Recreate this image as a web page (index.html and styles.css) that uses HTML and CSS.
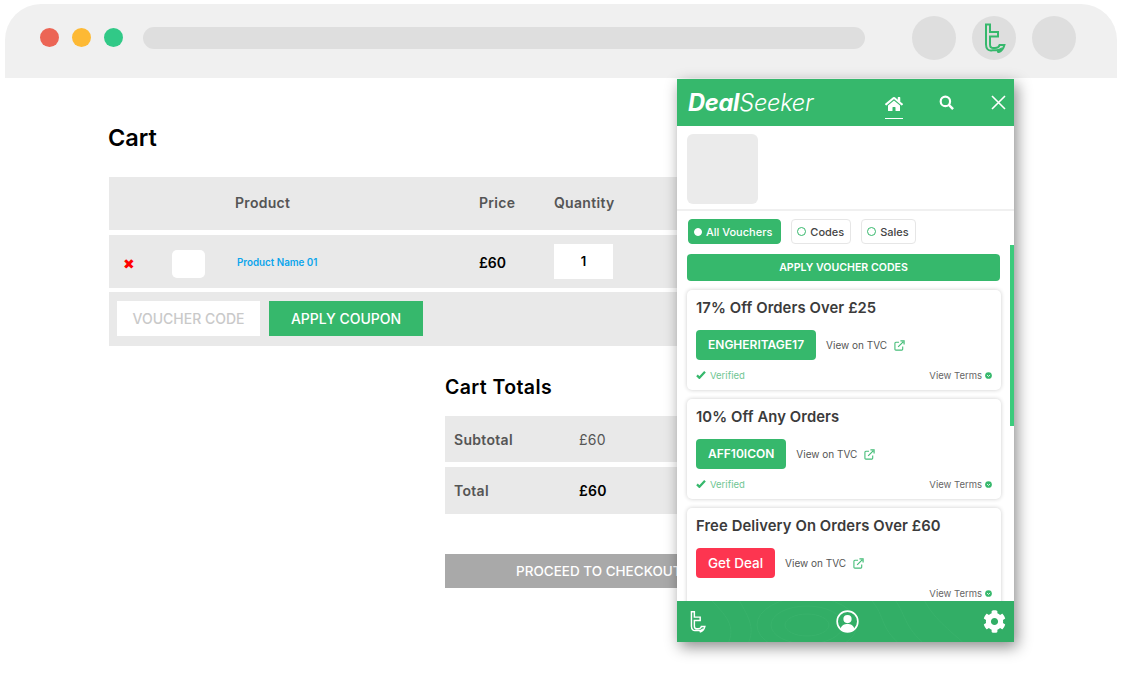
FILE: index.html
```html
<!DOCTYPE html>
<html lang="en">
<head>
    <meta charset="UTF-8">
    <meta name="viewport" content="width=device-width, initial-scale=1.0">
    <title>DealSeeker</title>
    <link rel="stylesheet" href="styles.css">
</head>
<body>
    <svg class="icon-defs" width="0" height="0">
        <symbol id="t-logo" viewBox="0 0 22 30">
            <path d="M2 1.500h4v7.500h8v4.500H6v8c0 2.600 1.400 3.600 3.500 3.600h1.500c2.600 0 4-1 4.600-3.100h4.800c-1 4-2.800 6.500-6.900 7.400 1.800-1.200 2.400-2.100 2.700-3-1 .6-2.300.9-3.900.9H8.500C4.300 28.300 2 25.700 2 21.500z"/>
        </symbol>
        <symbol id="external" viewBox="0 0 12 12">
            <path d="M9.500 7v3a1 1 0 0 1-1 1H2a1 1 0 0 1-1-1V3.500a1 1 0 0 1 1-1h3.500" fill="none" stroke="currentColor" stroke-width="1.200"/>
            <path d="M4.500 7.500L10 2M7 1h4v4" fill="none" stroke="currentColor" stroke-width="1.300"/>
        </symbol>
        <symbol id="check" viewBox="0 0 12 10">
            <path d="M1 5.500l3 3L11 1" fill="none" stroke="currentColor" stroke-width="2.800"/>
        </symbol>
        <symbol id="down-circle" viewBox="0 0 10 10">
            <circle cx="5" cy="5" r="4.800" fill="currentColor"/>
            <path d="M2.800 4.200L5 6.400l2.200-2.200" fill="none" stroke="#fff" stroke-width="1.200"/>
        </symbol>
    </svg>

    <header class="browser-bar">
        <div class="dots">
            <span class="dot dot-red"></span>
            <span class="dot dot-yellow"></span>
            <span class="dot dot-green"></span>
        </div>
        <div class="address"></div>
        <div class="browser-buttons">
            <span class="round-btn"></span>
            <span class="round-btn">
                <svg class="ext-logo" width="22" height="30"><use href="#t-logo"/></svg>
            </span>
            <span class="round-btn"></span>
        </div>
    </header>

    <main class="shop">
        <h1 class="cart-title">Cart</h1>

        <div class="cart-row cart-head">
            <span class="col-product">Product</span>
            <span class="col-price">Price</span>
            <span class="col-qty">Quantity</span>
        </div>
        <div class="cart-row cart-item">
            <span class="remove">&#10006;</span>
            <span class="thumb"></span>
            <a class="product-name">Product Name 01</a>
            <span class="col-price strong">£60</span>
            <span class="qty-box">1</span>
        </div>
        <div class="cart-row cart-coupon">
            <span class="voucher-input">VOUCHER CODE</span>
            <span class="coupon-btn">APPLY COUPON</span>
        </div>

        <section class="totals">
            <h2 class="totals-title">Cart Totals</h2>
            <div class="totals-row subtotal">
                <span class="totals-label">Subtotal</span>
                <span>£60</span>
            </div>
            <div class="totals-row total">
                <span class="totals-label">Total</span>
                <span class="strong">£60</span>
            </div>
            <div class="checkout">PROCEED TO CHECKOUT</div>
        </section>
    </main>

    <aside class="popup">
        <div class="popup-header">
            <div class="logo"><b>Deal</b>Seeker</div>
            <span class="nav-home">
                <svg viewBox="0 0 576 512" width="18" height="16"><path fill="#fff" d="M280.37 148.26L96 300.11V464a16 16 0 0 0 16 16l112.06-.29a16 16 0 0 0 15.92-16V368a16 16 0 0 1 16-16h64a16 16 0 0 1 16 16v95.64a16 16 0 0 0 16 16.05L464 480a16 16 0 0 0 16-16V300L295.67 148.26a12.19 12.19 0 0 0-15.3 0zM571.6 251.47L488 182.56V44.05a12 12 0 0 0-12-12h-56a12 12 0 0 0-12 12v72.61L318.47 43a48 48 0 0 0-61 0L4.34 251.47a12 12 0 0 0-1.6 16.9l25.5 31A12 12 0 0 0 45.15 301l235.22-193.74a12.19 12.19 0 0 1 15.3 0L530.9 301a12 12 0 0 0 16.9-1.6l25.5-31a12 12 0 0 0-1.7-16.93z"/></svg>
            </span>
            <svg class="nav-search" viewBox="0 0 16 16" width="15" height="15"><circle cx="6.800" cy="6.800" r="5" fill="none" stroke="#fff" stroke-width="2.300"/><path d="M10.500 10.500L15 15" stroke="#fff" stroke-width="2.600"/></svg>
            <svg class="nav-close" viewBox="0 0 15 15" width="15" height="15"><path d="M1 1l13 13M14 1L1 14" stroke="#fff" stroke-width="1.600"/></svg>
        </div>

        <div class="store">
            <div class="store-logo"></div>
        </div>

        <div class="popup-body">
            <div class="scrollbar"></div>
            <div class="tabs">
                <span class="tab tab-active"><i class="radio"></i>All Vouchers</span>
                <span class="tab"><i class="radio"></i>Codes</span>
                <span class="tab"><i class="radio"></i>Sales</span>
            </div>
            <div class="apply-all">APPLY VOUCHER CODES</div>

            <article class="card">
                <h3 class="card-title">17% Off Orders Over £25</h3>
                <div class="card-action">
                    <span class="code-btn">ENGHERITAGE17</span>
                    <span class="view-link">View on TVC</span>
                    <svg class="ext-icon" width="11" height="11"><use href="#external"/></svg>
                </div>
                <div class="card-foot">
                    <span class="verified"><svg width="10" height="8"><use href="#check"/></svg>Verified</span>
                    <span class="terms">View Terms<svg width="7" height="7"><use href="#down-circle"/></svg></span>
                </div>
            </article>

            <article class="card">
                <h3 class="card-title">10% Off Any Orders</h3>
                <div class="card-action">
                    <span class="code-btn">AFF10ICON</span>
                    <span class="view-link">View on TVC</span>
                    <svg class="ext-icon" width="11" height="11"><use href="#external"/></svg>
                </div>
                <div class="card-foot">
                    <span class="verified"><svg width="10" height="8"><use href="#check"/></svg>Verified</span>
                    <span class="terms">View Terms<svg width="7" height="7"><use href="#down-circle"/></svg></span>
                </div>
            </article>

            <article class="card">
                <h3 class="card-title">Free Delivery On Orders Over £60</h3>
                <div class="card-action">
                    <span class="code-btn deal-btn">Get Deal</span>
                    <span class="view-link">View on TVC</span>
                    <svg class="ext-icon" width="11" height="11"><use href="#external"/></svg>
                </div>
                <div class="card-foot">
                    <span class="verified"></span>
                    <span class="terms">View Terms<svg width="7" height="7"><use href="#down-circle"/></svg></span>
                </div>
            </article>
        </div>

        <div class="popup-footer">
            <svg class="foot-pattern" viewBox="0 0 337 41" preserveAspectRatio="none">
                <g fill="none" stroke="#38b26b" stroke-width="1">
                    <ellipse cx="130" cy="24" rx="50" ry="28"/>
                    <ellipse cx="130" cy="24" rx="36" ry="19"/>
                    <ellipse cx="130" cy="24" rx="22" ry="11"/>
                    <path d="M190 -5c20 18 10 30 35 50M215 -5c15 18 10 30 35 50M245 -5c10 20 20 28 45 50"/>
                    <path d="M30 -5c20 20 30 30 20 50M60 -5c10 20 20 30 10 50"/>
                </g>
            </svg>
            <svg class="foot-logo" width="16" height="25"><use href="#t-logo"/></svg>
            <svg class="foot-user" viewBox="0 0 24 24" width="23" height="23">
                <circle cx="12" cy="12" r="10.800" fill="none" stroke="#fff" stroke-width="1.700"/>
                <circle cx="12" cy="9.500" r="4.300" fill="#fff"/>
                <path d="M4.800 19.500c1-3.800 3.800-5 7.200-5s6.200 1.200 7.200 5c-2 1.900-4.500 3-7.200 3s-5.200-1.100-7.200-3z" fill="#fff"/>
            </svg>
            <svg class="foot-cog" viewBox="0 0 512 512" width="23" height="23"><path fill="#fff" d="M487.4 315.7l-42.6-24.6c4.3-23.2 4.3-47 0-70.2l42.6-24.6c4.9-2.8 7.1-8.6 5.5-14-11.1-35.6-30-67.8-54.7-94.6-3.8-4.1-10-5.1-14.8-2.3L380.8 110c-17.9-15.4-38.5-27.3-60.8-35.1V25.8c0-5.6-3.9-10.5-9.4-11.7-36.7-8.2-74.3-7.8-109.2 0-5.5 1.2-9.4 6.1-9.4 11.7V75c-22.2 7.9-42.8 19.8-60.8 35.1L88.7 85.5c-4.9-2.8-11-1.9-14.8 2.3-24.7 26.7-43.6 58.9-54.7 94.6-1.7 5.4.6 11.2 5.5 14L67.3 221c-4.3 23.2-4.3 47 0 70.2l-42.6 24.6c-4.9 2.8-7.1 8.6-5.5 14 11.1 35.6 30 67.8 54.7 94.6 3.8 4.1 10 5.1 14.8 2.3l42.6-24.6c17.9 15.4 38.5 27.3 60.8 35.1v49.2c0 5.6 3.9 10.5 9.4 11.7 36.7 8.2 74.3 7.8 109.2 0 5.5-1.2 9.4-6.1 9.4-11.7v-49.2c22.2-7.9 42.8-19.8 60.8-35.1l42.6 24.6c4.9 2.8 11 1.9 14.8-2.3 24.7-26.7 43.6-58.9 54.7-94.6 1.5-5.5-.7-11.3-5.6-14.1zM256 336c-44.1 0-80-35.9-80-80s35.9-80 80-80 80 35.9 80 80-35.9 80-80 80z"/></svg>
        </div>
    </aside>
</body>
</html>
```

FILE: styles.css
```css
* {
    box-sizing: border-box;
}

html, body {
    height: 100%;
}

body {
    margin: 0;
    background-color: #fff;
    font-family: Inter, "Open Sans", sans-serif;
    color: #555;
    overflow: hidden;
    position: relative;
}

.icon-defs {
    position: absolute;
}

/* browser chrome */
.browser-bar {
    display: flex;
    align-items: center;
    width: 1112px;
    height: 74px;
    margin: 4px 0 0 5px;
    padding: 0 41px 7px 35px;
    background-color: #f0f0f0;
    border-radius: 36px 36px 0 0;
}

.dots {
    display: flex;
    gap: 13px;
}

.dot {
    width: 19px;
    height: 19px;
    border-radius: 50%;
}

.dot-red { background-color: #ec6555; }
.dot-yellow { background-color: #fdb934; }
.dot-green { background-color: #31c987; }

.address {
    width: 722px;
    height: 22px;
    margin-left: 20px;
    border-radius: 11px;
    background-color: #dedede;
}

.browser-buttons {
    display: flex;
    gap: 16px;
    margin-left: 47px;
}

.round-btn {
    display: flex;
    align-items: center;
    justify-content: center;
    width: 44px;
    height: 44px;
    border-radius: 50%;
    background-color: #dedede;
}

.ext-logo {
    margin-left: 2px;
    fill: none;
    stroke: #36b86c;
    stroke-width: 2;
}

/* shop page */
.shop {
    padding: 0 0 0 109px;
}

.cart-title {
    margin: 46px 0 25px -1px;
    font-size: 23.500px;
    line-height: 28px;
    font-weight: 600;
    color: #000;
}

.cart-row {
    display: flex;
    align-items: center;
    width: 800px;
    background-color: #e9e9e9;
    margin-bottom: 5px;
}

.cart-head {
    height: 53px;
    padding-bottom: 2px;
    font-size: 14px;
    font-weight: 600;
    letter-spacing: 0.3px;
}

.col-product {
    margin-left: 126px;
    width: 244px;
}

.col-price {
    width: 75px;
    font-size: 14px;
}

.cart-item {
    height: 53px;
    margin-bottom: 4px;
}

.remove {
    width: 14px;
    margin-left: 14px;
    color: #f00;
    font-size: 14px;
    line-height: 1;
    font-family: "DejaVu Sans", sans-serif;
    padding-top: 4px;
}

.thumb {
    width: 33px;
    height: 28px;
    margin-left: 35px;
    border-radius: 5px;
    background-color: #fff;
    margin-top: 4px;
}

.product-name {
    width: 242px;
    margin-left: 32px;
    padding-top: 2px;
    color: #0ba5ec;
    font-size: 9.800px;
    font-weight: 600;
}

.strong {
    color: #000;
    font-weight: 600;
}

.cart-item .col-price {
    padding-top: 1px;
}

.qty-box {
    width: 59px;
    height: 35px;
    line-height: 35px;
    text-align: center;
    background-color: #fff;
    color: #000;
    font-size: 13px;
    font-weight: 600;
}

.cart-coupon {
    height: 54px;
    padding-left: 8px;
    padding-bottom: 1px;
    gap: 9px;
}

.voucher-input {
    width: 143px;
    height: 35px;
    line-height: 35px;
    text-align: center;
    background-color: #fff;
    color: #c9c9c9;
    font-size: 14px;
    font-weight: 500;
}

.coupon-btn {
    width: 154px;
    height: 35px;
    line-height: 35px;
    text-align: center;
    background-color: #36b86c;
    color: #fff;
    font-size: 14px;
    font-weight: 500;
}

.totals {
    margin-left: 336px;
}

.totals-title {
    margin: 27px 0 15px;
    font-size: 19.500px;
    line-height: 28px;
    font-weight: 600;
    letter-spacing: 0.4px;
    color: #000;
}

.totals-row {
    display: flex;
    align-items: center;
    width: 450px;
    height: 46px;
    padding-left: 9px;
    background-color: #e9e9e9;
    font-size: 14px;
    letter-spacing: 0.3px;
    margin-bottom: 5px;
}

.totals-row.total {
    height: 47px;
    padding-bottom: 1px;
}

.totals-label {
    width: 125px;
    font-weight: 600;
}

.checkout {
    width: 450px;
    height: 34px;
    line-height: 34px;
    margin-top: 40px;
    padding-left: 71px;
    background-color: #a9a9a9;
    color: #fff;
    font-size: 13.500px;
    font-weight: 500;
    white-space: nowrap;
}

/* extension popup, sits on top of the page */
.popup {
    position: absolute;
    left: 677px;
    top: 79px;
    display: flex;
    flex-direction: column;
    width: 337px;
    height: 563px;
    background-color: #fff;
    box-shadow: 3px 5px 14px rgba(0, 0, 0, 0.45);
}

.popup-header {
    display: flex;
    align-items: center;
    flex: none;
    height: 47px;
    padding-left: 11px;
    background-color: #36b86c;
}

.logo {
    width: 197px;
    color: #fff;
    font-size: 23.700px;
    font-style: italic;
    font-weight: 300;
    letter-spacing: -0.3px;
}

.logo b {
    font-weight: 700;
}

.nav-home {
    display: flex;
    height: 23px;
    margin-top: 9px;
    border-bottom: 1.500px solid #fff;
}

.nav-search {
    margin-left: 36px;
}

.nav-close {
    margin-left: 37px;
}

.store {
    flex: none;
    height: 85px;
    padding: 8px 0 0 10px;
    border-bottom: 2px solid #f0f0f0;
}

.store-logo {
    width: 71px;
    height: 70px;
    border-radius: 6px;
    background-color: #ebebeb;
}

.popup-body {
    position: relative;
    flex: 1;
    min-height: 0;
    overflow: hidden;
    padding: 8px 13px 0 10px;
}

.scrollbar {
    position: absolute;
    right: 0;
    top: 34px;
    width: 4px;
    height: 181px;
    background-color: #3ccb7c;
}

.tabs {
    display: flex;
    gap: 10px;
    margin-left: 1px;
}

.tab {
    display: flex;
    align-items: center;
    gap: 4px;
    height: 25px;
    padding: 0 6px 0 5px;
    border: 1px solid #e6e6e6;
    border-radius: 4px;
    background-color: #fff;
    color: #444;
    font-size: 11px;
    font-weight: 500;
}

.radio {
    width: 9px;
    height: 9px;
    border-radius: 50%;
    border: 1px solid #36b86c;
}

.tab-active {
    padding-right: 8px;
    background-color: #36b86c;
    border-color: #36b86c;
    color: #fff;
}

.tab-active .radio {
    width: 8px;
    height: 8px;
    background-color: #fff;
    border-color: #fff;
}

.apply-all {
    height: 27px;
    line-height: 27px;
    margin: 10px 1px 0 0;
    border-radius: 4px;
    background-color: #36b86c;
    color: #fff;
    font-size: 10.600px;
    font-weight: 600;
    text-align: center;
}

.card {
    height: 100px;
    margin-top: 9px;
    padding: 8px 9px 0;
    border-radius: 5px;
    background-color: #fff;
    box-shadow: 0 0 4px rgba(0, 0, 0, 0.2);
}

.card-title {
    margin: 0;
    font-size: 14.800px;
    line-height: 20px;
    font-weight: 600;
    letter-spacing: 0.1px;
    color: #3b3b3b;
}

.card-action {
    display: flex;
    align-items: center;
    margin-top: 12px;
}

.code-btn {
    height: 30px;
    line-height: 30px;
    padding: 0 12px;
    border-radius: 4px;
    background-color: #36b86c;
    color: #fff;
    font-size: 12px;
    font-weight: 600;
}

.deal-btn {
    background-color: #fd3550;
    font-size: 13.500px;
    font-weight: 500;
}

.view-link {
    margin-left: 10px;
    font-size: 10px;
}

.ext-icon {
    margin-left: 7px;
    color: #45bd78;
}

.card-foot {
    display: flex;
    align-items: center;
    justify-content: space-between;
    margin-top: 8px;
    height: 14px;
}

.verified {
    display: flex;
    align-items: center;
    gap: 4px;
    color: #6fc693;
    font-size: 9.500px;
}

.verified svg {
    color: #36b86c;
}

.terms {
    display: flex;
    align-items: center;
    gap: 3px;
    font-size: 9.500px;
    color: #666;
}

.terms svg {
    color: #36b86c;
}

.popup-footer {
    position: relative;
    display: flex;
    align-items: center;
    justify-content: space-between;
    flex: none;
    height: 41px;
    padding: 0 8px 0 13px;
    background-color: #32ae66;
}

.foot-pattern {
    position: absolute;
    left: 0;
    top: 0;
    width: 100%;
    height: 100%;
}

.foot-logo {
    position: relative;
    fill: none;
    stroke: #fff;
    stroke-width: 2;
}

.foot-user,
.foot-cog {
    position: relative;
}

.foot-user {
    margin-left: 6px;
}
```
